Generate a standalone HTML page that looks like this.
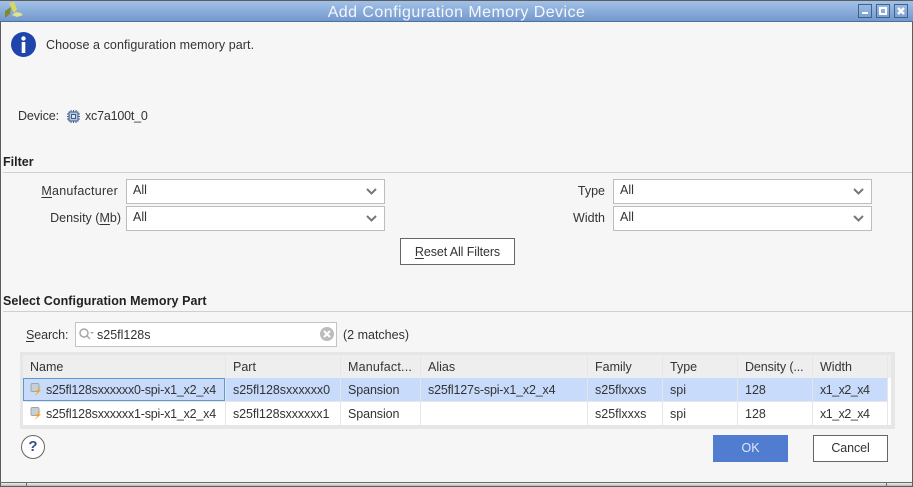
<!DOCTYPE html>
<html>
<head>
<meta charset="utf-8">
<style>
html,body{margin:0;padding:0;background:#f6f6f6;}
body{width:913px;height:487px;position:relative;overflow:hidden;font-family:"Liberation Sans",sans-serif;font-size:12.5px;color:#333;}
.a{position:absolute;}
.t{position:absolute;white-space:nowrap;line-height:16px;height:16px;}
.r{text-align:right;}
.b{font-weight:bold;color:#222;}
.combo{position:absolute;background:#fff;border:1px solid #bdbdbd;box-sizing:border-box;height:25px;}
.line{position:absolute;background:#d0d0d0;height:1px;}
.sep{position:absolute;width:1px;background:#e6e6e6;}
.w{letter-spacing:-.5px;}
.n{letter-spacing:-.2px;}
u{text-underline-offset:2px;}
</style>
</head>
<body>
<!-- title bar -->
<div class="a" style="left:0;top:0;width:913px;height:1px;background:#5c5c5c;"></div>
<div class="a" style="left:0;top:1px;width:913px;height:20px;background:linear-gradient(#a2c1e8,#7398cc);"></div>
<div class="a" style="left:0;top:21px;width:913px;height:1px;background:#4d719c;"></div>
<svg class="a" style="left:4px;top:2px;" width="20" height="17" viewBox="0 0 20 17">
<path d="M5 1L10 0L13 7L10 11Z" fill="#d8d860"/>
<path d="M1 9L7 5L6 12L1 16Z" fill="#7f8a2c"/>
<path d="M8 13L12 10L17 11L19 13L13 15Z" fill="#e0e48c"/>
</svg>
<div class="t" style="left:0;top:4px;width:913px;text-align:center;color:#f4f7fb;font-size:16px;line-height:17px;letter-spacing:.45px;">Add Configuration Memory Device</div>
<div class="a" style="left:858px;top:4px;width:14px;height:14px;border:1px solid #3f638f;box-sizing:border-box;"><div class="a" style="left:3px;top:7px;width:6px;height:2px;background:#fff;"></div></div>
<div class="a" style="left:876px;top:4px;width:14px;height:14px;border:1px solid #3f638f;box-sizing:border-box;"><div class="a" style="left:2px;top:2px;width:8px;height:8px;border:2px solid #fff;box-sizing:border-box;"></div></div>
<div class="a" style="left:894px;top:4px;width:14px;height:14px;border:1px solid #3f638f;box-sizing:border-box;">
<svg class="a" style="left:2px;top:2px;" width="8" height="8" viewBox="0 0 8 8"><path d="M1 1L7 7M7 1L1 7" stroke="#fff" stroke-width="2.4"/></svg></div>

<!-- window borders -->
<div class="a" style="left:0;top:22px;width:1px;height:465px;background:#5c5c5c;"></div>
<div class="a" style="left:912px;top:22px;width:1px;height:465px;background:#5c5c5c;"></div>
<div class="a" style="left:1px;top:483px;width:911px;height:3px;background:linear-gradient(#f0f0f0,#b8b8b8);"></div>
<div class="a" style="left:0;top:482px;width:913px;height:1px;background:#6a6a6a;"></div>
<div class="a" style="left:0;top:486px;width:913px;height:1px;background:#5c5c5c;"></div>
<div class="a" style="left:26px;top:482px;width:1px;height:5px;background:#6a6a6a;"></div>
<div class="a" style="left:886px;top:482px;width:1px;height:5px;background:#6a6a6a;"></div>

<!-- info -->
<svg class="a" style="left:11px;top:32px;" width="25" height="25" viewBox="0 0 25 25">
<circle cx="12.5" cy="12.5" r="12.5" fill="#1f44ac"/>
<rect x="10.7" y="10" width="3.6" height="11" fill="#fff"/>
<circle cx="12.5" cy="6.5" r="2.2" fill="#fff"/>
</svg>
<div class="t" style="left:46px;top:37px;letter-spacing:.07px;">Choose a configuration memory part.</div>

<div class="t" style="left:18px;top:108px;letter-spacing:-.1px;">Device:</div>
<svg class="a" style="left:67px;top:110px;" width="13" height="13" viewBox="0 0 13 13">
<rect x="2" y="2" width="9" height="9" fill="#b8c6dc" stroke="#3f5e8e" stroke-width="1"/>
<rect x="4.5" y="4.5" width="4" height="4" fill="#dfe6f0" stroke="#3f5e8e" stroke-width="1"/>
<path d="M4 0V2M6.500 0V2M9 0V2M4 11V13M6.500 11V13M9 11V13M0 4H2M0 6.500H2M0 9H2M11 4H13M11 6.500H13M11 9H13" stroke="#3f5e8e" stroke-width="1"/>
</svg>
<div class="t" style="left:85px;top:108px;letter-spacing:-.2px;">xc7a100t_0</div>

<!-- Filter -->
<div class="t b" style="left:3px;top:154px;">Filter</div>
<div class="line" style="left:3px;top:172px;width:909px;"></div>

<div class="t r" style="left:20px;top:183px;width:98px;letter-spacing:.25px;"><u>M</u>anufacturer</div>
<div class="combo" style="left:126px;top:179px;width:259px;"></div>
<div class="t" style="left:133px;top:182px;">All</div>
<svg class="a" style="left:366px;top:188px;" width="11" height="7" viewBox="0 0 11 7"><path d="M1 1L5.500 5.500L10 1" fill="none" stroke="#777" stroke-width="2"/></svg>

<div class="t r" style="left:20px;top:210px;width:101px;">Density (<u>M</u>b)</div>
<div class="combo" style="left:126px;top:206px;width:259px;"></div>
<div class="t" style="left:133px;top:209px;">All</div>
<svg class="a" style="left:366px;top:215px;" width="11" height="7" viewBox="0 0 11 7"><path d="M1 1L5.500 5.500L10 1" fill="none" stroke="#777" stroke-width="2"/></svg>

<div class="t r" style="left:540px;top:183px;width:65px;">Type</div>
<div class="combo" style="left:613px;top:179px;width:259px;"></div>
<div class="t" style="left:620px;top:182px;">All</div>
<svg class="a" style="left:853px;top:188px;" width="11" height="7" viewBox="0 0 11 7"><path d="M1 1L5.500 5.500L10 1" fill="none" stroke="#777" stroke-width="2"/></svg>

<div class="t r" style="left:540px;top:210px;width:65px;">Width</div>
<div class="combo" style="left:613px;top:206px;width:259px;"></div>
<div class="t" style="left:620px;top:209px;">All</div>
<svg class="a" style="left:853px;top:215px;" width="11" height="7" viewBox="0 0 11 7"><path d="M1 1L5.500 5.500L10 1" fill="none" stroke="#777" stroke-width="2"/></svg>

<div class="a" style="left:400px;top:238px;width:115px;height:27px;background:#fff;border:1px solid #666;box-sizing:border-box;"></div>
<div class="t" style="left:400px;top:244px;width:115px;text-align:center;letter-spacing:-.1px;"><u>R</u>eset All Filters</div>

<!-- Select -->
<div class="t b" style="left:3px;top:293px;letter-spacing:.07px;">Select Configuration Memory Part</div>
<div class="line" style="left:3px;top:311px;width:909px;"></div>

<div class="t" style="left:26px;top:327px;letter-spacing:-.1px;"><u>S</u>earch:</div>
<div class="a" style="left:75px;top:322px;width:262px;height:25px;background:#fff;border:1px solid #c4c4c4;box-sizing:border-box;"></div>
<svg class="a" style="left:78px;top:327px;" width="16" height="14" viewBox="0 0 16 14">
<circle cx="6" cy="6" r="4" fill="none" stroke="#a8a8a8" stroke-width="1.500"/>
<path d="M9 9L12 12" stroke="#a8a8a8" stroke-width="1.500"/>
<path d="M12 5H16L14 7Z" fill="#a8a8a8"/>
</svg>
<div class="t" style="left:97px;top:327px;">s25fl128s</div>
<svg class="a" style="left:320px;top:327px;" width="14" height="14" viewBox="0 0 14 14">
<circle cx="7" cy="7" r="7" fill="#bcbcbc"/>
<path d="M4 4L10 10M10 4L4 10" stroke="#fff" stroke-width="2"/>
</svg>
<div class="t" style="left:343px;top:327px;">(2 matches)</div>

<!-- table -->
<div class="a" style="left:20px;top:352px;width:875px;height:77px;background:#e6e6e6;"></div>
<div class="a" style="left:23px;top:355px;width:868px;height:23px;background:#eeeeee;"></div>
<div class="a" style="left:23px;top:378px;width:865px;height:23px;background:#c8dbfb;"></div>
<div class="a" style="left:23px;top:402px;width:865px;height:23px;background:#fff;"></div>
<div class="a" style="left:888px;top:378px;width:3px;height:47px;background:#fff;"></div>
<div class="a" style="left:23px;top:378px;width:202px;height:23px;border:1px solid #5a9ad0;box-sizing:border-box;"></div>
<div class="sep" style="left:225px;top:355px;height:70px;"></div>
<div class="sep" style="left:340px;top:355px;height:70px;"></div>
<div class="sep" style="left:420px;top:355px;height:70px;"></div>
<div class="sep" style="left:587px;top:355px;height:70px;"></div>
<div class="sep" style="left:662px;top:355px;height:70px;"></div>
<div class="sep" style="left:737px;top:355px;height:70px;"></div>
<div class="sep" style="left:812px;top:355px;height:70px;"></div>
<div class="sep" style="left:887px;top:355px;height:70px;"></div>

<div class="t" style="left:30px;top:359px;">Name</div>
<div class="t" style="left:233px;top:359px;">Part</div>
<div class="t" style="left:348px;top:359px;letter-spacing:.2px;">Manufact...</div>
<div class="t" style="left:428px;top:359px;">Alias</div>
<div class="t" style="left:595px;top:359px;">Family</div>
<div class="t" style="left:670px;top:359px;">Type</div>
<div class="t" style="left:745px;top:359px;letter-spacing:-.1px;">Density (...</div>
<div class="t" style="left:820px;top:359px;">Width</div>

<svg class="a" style="left:30px;top:383px;" width="13" height="14" viewBox="0 0 13 14">
<rect x="1" y="0.500" width="8" height="8" rx="1.500" fill="#c8ced6" stroke="#a0a5ac"/>
<path d="M11 3.500L5 9H7.500L4.500 13L11 7.500H8.500Z" fill="#f2a51e"/>
</svg>
<div class="t n" style="left:46px;top:382px;">s25fl128sxxxxxx0-spi-x1_x2_x4</div>
<div class="t" style="left:233px;top:382px;letter-spacing:-.06px;">s25fl128sxxxxxx0</div>
<div class="t" style="left:348px;top:382px;letter-spacing:-.1px;">Spansion</div>
<div class="t" style="left:428px;top:382px;letter-spacing:-.18px;">s25fl127s-spi-x1_x2_x4</div>
<div class="t" style="left:595px;top:382px;">s25flxxxs</div>
<div class="t" style="left:670px;top:382px;">spi</div>
<div class="t" style="left:745px;top:382px;">128</div>
<div class="t w" style="left:820px;top:382px;">x1_x2_x4</div>

<svg class="a" style="left:30px;top:407px;" width="13" height="14" viewBox="0 0 13 14">
<rect x="1" y="0.500" width="8" height="8" rx="1.500" fill="#c8ced6" stroke="#a0a5ac"/>
<path d="M11 3.500L5 9H7.500L4.500 13L11 7.500H8.500Z" fill="#f2a51e"/>
</svg>
<div class="t n" style="left:46px;top:406px;">s25fl128sxxxxxx1-spi-x1_x2_x4</div>
<div class="t" style="left:233px;top:406px;letter-spacing:-.1px;">s25fl128sxxxxxx1</div>
<div class="t" style="left:348px;top:406px;letter-spacing:-.1px;">Spansion</div>
<div class="t" style="left:595px;top:406px;">s25flxxxs</div>
<div class="t" style="left:670px;top:406px;">spi</div>
<div class="t" style="left:745px;top:406px;">128</div>
<div class="t w" style="left:820px;top:406px;">x1_x2_x4</div>

<!-- help -->
<div class="a" style="left:21px;top:435px;width:24px;height:24px;border:1px solid #666;border-radius:50%;background:#fff;box-sizing:border-box;text-align:center;font-weight:bold;font-size:15px;line-height:22px;color:#34508c;">?</div>

<!-- buttons -->
<div class="a" style="left:713px;top:435px;width:75px;height:27px;background:#507dd0;color:#dfe8f8;text-align:center;line-height:27px;">OK</div>
<div class="a" style="left:813px;top:435px;width:75px;height:27px;background:#fff;border:1px solid #666;box-sizing:border-box;text-align:center;line-height:25px;letter-spacing:-.1px;">Cancel</div>
</body>
</html>
